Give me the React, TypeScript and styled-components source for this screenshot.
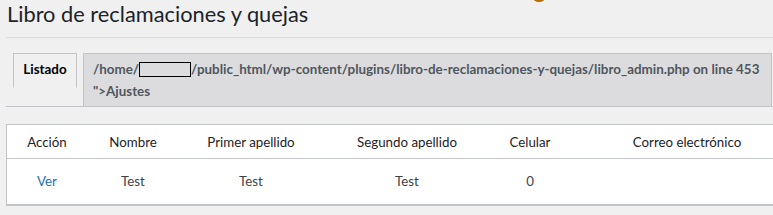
import * as React from "react";
import styled, { createGlobalStyle } from "styled-components";

const GlobalStyle = createGlobalStyle`
  html, body {
    margin: 0;
    padding: 0;
    background: #f0f0f1;
  }
  body {
    font-family: Lato, "Open Sans", sans-serif;
    color: #3c434a;
    overflow: hidden;
  }
`;

const Wrap = styled.div`
  position: relative;
  min-height: 215px;
  padding-left: 6px;
  background: #f0f0f1;
`;

// bit of an avatar/icon from above the viewport
const Peek = styled.span`
  position: absolute;
  top: -6px;
  left: 533px;
  width: 12px;
  height: 8px;
  border-radius: 50%;
  background: #b86b00;
`;

const Title = styled.h1`
  margin: 0;
  padding: 0 0 0 1px;
  height: 38px;
  box-sizing: border-box;
  font-size: 21.8px;
  font-weight: 400;
  line-height: 27px;
  color: #1d2327;
  border-bottom: 1px solid #dcdcde;
`;

const TabBar = styled.div`
  display: flex;
  align-items: flex-start;
  margin-top: 15px;
  border-bottom: 1px solid #c3c4c7;
  padding-left: 7px;
`;

const Tab = styled.a<{ $active?: boolean }>`
  display: block;
  box-sizing: border-box;
  flex: ${({ $active }) => ($active ? "0 0 64px" : "1 1 auto")};
  margin: 0 ${({ $active }) => ($active ? "0" : "1px")} -1px ${({ $active }) => ($active ? "0" : "6px")};
  padding: 5px 9px ${({ $active }) => ($active ? "6px" : "4px")};
  border: 1px solid #c3c4c7;
  border-bottom-color: ${({ $active }) => ($active ? "#f0f0f1" : "#c3c4c7")};
  background: ${({ $active }) => ($active ? "#f0f0f1" : "#dcdcde")};
  color: ${({ $active }) => ($active ? "#000" : "#50575e")};
  font-size: 13.4px;
  font-weight: 700;
  line-height: 21.5px;
  text-align: ${({ $active }) => ($active ? "center" : "left")};
  text-decoration: none;
  white-space: nowrap;
`;

const Redacted = styled.span`
  display: inline-block;
  box-sizing: border-box;
  width: 52px;
  height: 15px;
  vertical-align: -3px;
  border: 1.5px solid #000;
`;

const TableBox = styled.div`
  margin-top: 17px;
  width: 800px;
  background: #fff;
  border: 1px solid #c3c4c7;
  border-bottom-width: 2px;
  box-sizing: border-box;
`;

const Table = styled.table`
  width: 100%;
  border-collapse: collapse;
  table-layout: fixed;
`;

const Th = styled.th<{ $w: number }>`
  width: ${({ $w }) => $w}px;
  height: 33px;
  padding: 0;
  font-size: 13.3px;
  font-weight: 400;
  color: #1d2327;
  text-align: center;
  border-bottom: 1px solid #c3c4c7;
`;

const Td = styled.td`
  height: 43px;
  padding: 0 0 2px;
  font-size: 13.3px;
  color: #3c434a;
  text-align: center;
`;

const Link = styled.a`
  color: #2271b1;
  text-decoration: none;
`;

const columns = [
  { label: "Acción", w: 80 },
  { label: "Nombre", w: 92 },
  { label: "Primer apellido", w: 144 },
  { label: "Segundo apellido", w: 168 },
  { label: "Celular", w: 78 },
  { label: "Correo electrónico", w: 236 },
];

export default function App() {
  return (
    <Wrap>
      <GlobalStyle />
      <Peek />
      <Title>Libro de reclamaciones y quejas</Title>
      <TabBar>
        <Tab $active>Listado</Tab>
        <Tab>
          /home/<Redacted />/public_html/wp-content/plugins/libro-de-reclamaciones-y-quejas/libro_admin.php on line 453
          <br />
          "&gt;Ajustes
        </Tab>
      </TabBar>
      <TableBox>
        <Table>
          <thead>
            <tr>
              {columns.map((c) => (
                <Th key={c.label} $w={c.w}>
                  {c.label}
                </Th>
              ))}
            </tr>
          </thead>
          <tbody>
            <tr>
              <Td>
                <Link href="#">Ver</Link>
              </Td>
              <Td>Test</Td>
              <Td>Test</Td>
              <Td>Test</Td>
              <Td>0</Td>
              <Td></Td>
            </tr>
          </tbody>
        </Table>
      </TableBox>
    </Wrap>
  );
}
